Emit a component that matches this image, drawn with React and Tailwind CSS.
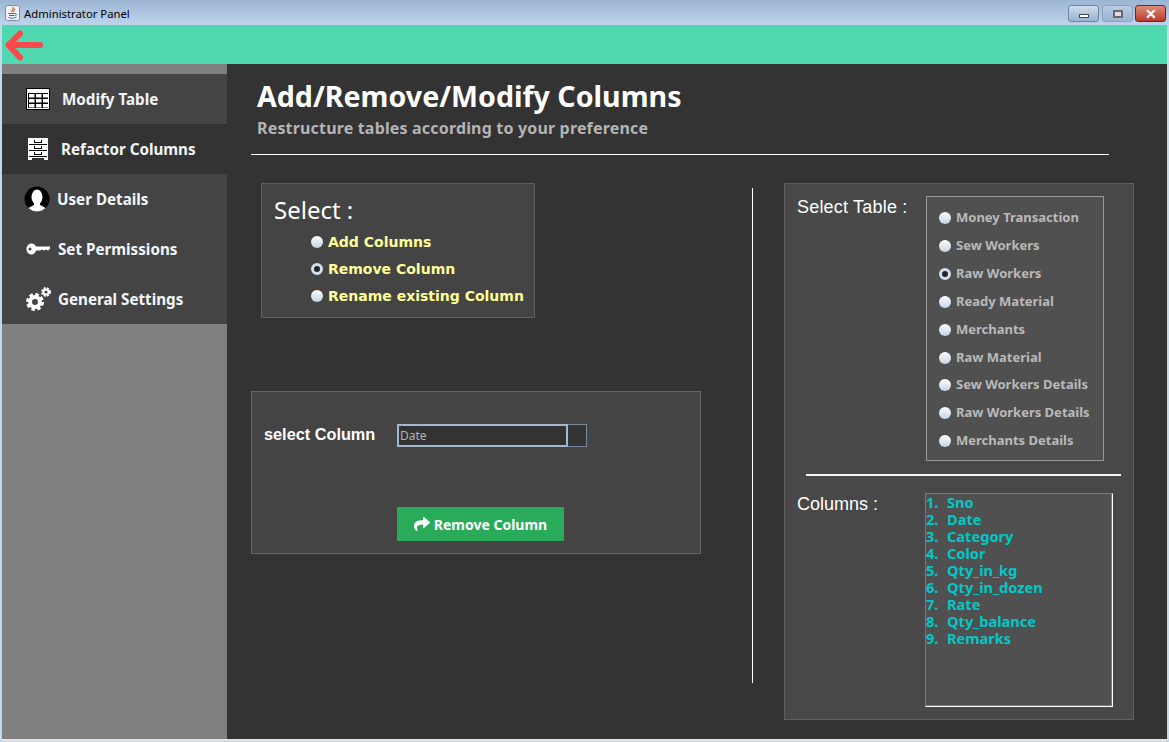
import { FaShare } from 'react-icons/fa';

const TableIcon = () => (
  <svg width="24" height="22" viewBox="0 0 24 22">
    <rect x="0" y="0" width="24" height="22" fill="#000" />
    <rect x="1" y="1" width="22" height="20" fill="#fff" />
    <rect x="2" y="5" width="20" height="15" fill="#000" />
    {[6, 11, 16].map((y) =>
      [3, 10, 17].map((x) => <rect key={`${x}-${y}`} x={x} y={y} width="5.5" height="3.5" fill="#fff" />)
    )}
  </svg>
);

const CabinetIcon = () => (
  <svg width="22" height="22" viewBox="0 0 22 22" shapeRendering="crispEdges">
    <rect x="1" y="0" width="20" height="20" fill="#fff" />
    <rect x="1" y="20" width="4" height="2" fill="#fff" />
    <rect x="17" y="20" width="4" height="2" fill="#fff" />
    {[1, 7, 13].map((y) => (
      <g key={y}>
        <rect x="2" y={y + 5} width="18" height="1" fill="#000" />
        <rect x="7" y={y + 1} width="1" height="2" fill="#000" />
        <rect x="14" y={y + 1} width="1" height="2" fill="#000" />
        <rect x="7" y={y + 3} width="8" height="1" fill="#000" />
      </g>
    ))}
  </svg>
);

const UserIcon = () => (
  <svg width="26" height="26" viewBox="0 0 26 26">
    <circle cx="13" cy="13" r="12.5" fill="#000" />
    <ellipse cx="13" cy="11" rx="5.5" ry="7.5" fill="#fff" />
    <path d="M10 16 L10 19 C7 20.5 5 21.5 4.5 22 C7 24.5 10 25.5 13 25.5 C16 25.5 19 24.5 21.5 22 C21 21.5 19 20.5 16 19 L16 16 Z" fill="#fff" />
  </svg>
);

const KeyIcon = () => (
  <svg width="24" height="12" viewBox="0 0 24 12">
    <path fillRule="evenodd" d="M5.5 0.5 C8 0.5 9.5 2 10 3.5 L24 3.5 L24 6 L22 7.5 L20 6.5 L18 7.5 L16 6.5 L14 7.5 L10 7.5 C9.5 9.5 8 11.5 5.5 11.5 C2.5 11.5 0.5 9 0.5 6 C0.5 3 2.5 0.5 5.5 0.5 Z M4 4.5 A1.5 1.5 0 1 0 4 7.5 A1.5 1.5 0 1 0 4 4.5 Z" fill="#fff" />
  </svg>
);

const GearsIcon = () => (
  <svg width="25" height="24" viewBox="0 0 25 24">
    <circle cx="9" cy="15" r="5" fill="none" stroke="#fff" strokeWidth="4" />
    <circle cx="9" cy="15" r="7.5" fill="none" stroke="#fff" strokeWidth="3" strokeDasharray="3.5 2.4" />
    <circle cx="20" cy="5" r="2.6" fill="none" stroke="#fff" strokeWidth="2" />
    <circle cx="20" cy="5" r="4" fill="none" stroke="#fff" strokeWidth="1.8" strokeDasharray="2 1.2" />
  </svg>
);

const JavaIcon = () => (
  <svg width="15" height="16" viewBox="0 0 15 16">
    <rect x="0.5" y="0.5" width="14" height="15" rx="2" fill="#eef2f7" stroke="#7d8ea3" />
    <path d="M8 2 C9.5 4 6 5 7 7 M9.5 3.5 C10 5 8 5.5 8.5 7" fill="none" stroke="#e0602a" strokeWidth="1.2" />
    <path d="M3.5 8.5 H10 M4 10.5 H9.5 M3.5 12.5 C6 13.5 9 13.5 11.5 12 M10 8.5 C12 8.5 12 10.5 10 10.5" fill="none" stroke="#3d6a9c" strokeWidth="1" />
  </svg>
);

const Radio = ({ checked }) => (
  <span
    className={`block w-[12px] h-[12px] shrink-0 rounded-full ${
      checked
        ? 'bg-[#23262b] border-[3px] border-[#d5deea]'
        : 'bg-gradient-to-b from-[#ffffff] to-[#c4d2e3]'
    }`}
  />
);

const sideItems = [
  { label: 'Modify Table', icon: <TableIcon />, iconBox: 'pl-[24px] gap-[12px]' },
  { label: 'Refactor Columns', icon: <CabinetIcon />, iconBox: 'pl-[25px] gap-[12px]', active: true },
  { label: 'User Details', icon: <UserIcon />, iconBox: 'pl-[22px] gap-[7px]' },
  { label: 'Set Permissions', icon: <KeyIcon />, iconBox: 'pl-[24px] gap-[8px]' },
  { label: 'General Settings', icon: <GearsIcon />, iconBox: 'pl-[24px] gap-[7px]' }
];

const modes = ['Add Columns', 'Remove Column', 'Rename existing Column'];
const tables = [
  'Money Transaction',
  'Sew Workers',
  'Raw Workers',
  'Ready Material',
  'Merchants',
  'Raw Material',
  'Sew Workers Details',
  'Raw Workers Details',
  'Merchants Details'
];
const columns = ['Sno', 'Date', 'Category', 'Color', 'Qty_in_kg', 'Qty_in_dozen', 'Rate', 'Qty_balance', 'Remarks'];

const App = () => {
  return (
    <div className="w-[1169px] h-[742px] flex flex-col overflow-hidden bg-[#c5d8ea] font-['Noto_Sans',sans-serif]">
      <div className="h-[25px] shrink-0 flex items-center bg-gradient-to-b from-[#9cb5d3] to-[#bed4ec] pl-[5px] pr-[3px]">
        <JavaIcon />
        <span className="ml-[4px] mt-[4px] text-[11.3px] text-black">Administrator Panel</span>
        <div className="ml-auto flex items-start self-start">
          <div className="w-[31px] h-[17px] mt-[5px] mr-[3px] rounded-[3px] border border-[#6f84a0] bg-gradient-to-b from-[#cfdceb] to-[#9ab3cf] flex items-end justify-center pb-[3px]">
            <span className="block w-[10px] h-[4px] bg-white border border-[#445]" />
          </div>
          <div className="w-[31px] h-[17px] mt-[5px] mr-[2px] rounded-[3px] border border-[#8ba2bd] bg-gradient-to-b from-[#b8cce2] to-[#9ab3cf] flex items-center justify-center">
            <span className="block w-[10px] h-[8px] bg-[#ddd] border-2 border-[#667]" />
          </div>
          <div className="w-[31px] h-[17px] mt-[5px] rounded-[3px] border border-[#5c2a2a] bg-gradient-to-b from-[#dd8a78] to-[#b83a2c] flex items-center justify-center">
            <span className="text-white text-[14px] leading-none font-bold">✕</span>
          </div>
        </div>
      </div>

      <div className="flex-1 flex flex-col mx-[2px] min-h-0">
        <div className="h-[39px] shrink-0 bg-[#50d8b0] flex items-center pl-[2px]">
          <svg width="40" height="32" viewBox="0 0 40 32">
            <path d="M16 4.5 L4.5 16 L16 28.5 M4.5 16 H36" fill="none" stroke="#fb4a4c" strokeWidth="6" strokeLinecap="round" strokeLinejoin="round" />
          </svg>
        </div>

        <div className="h-[675px] shrink-0 flex">
          <aside className="w-[225px] shrink-0 bg-[#808080] pt-[10px]">
            {sideItems.map((item) => (
              <div
                key={item.label}
                className={`h-[50px] flex items-center ${item.iconBox} ${item.active ? 'bg-[#333333]' : 'bg-[#444444]'}`}
              >
                {item.icon}
                <span className="text-[15.2px] font-bold text-[#f2f6fb] whitespace-nowrap">{item.label}</span>
              </div>
            ))}
          </aside>

          <main className="flex-1 bg-[#333333] pl-[24px] pt-[12px]">
            <div className="pl-[6px]">
              <h1 className="text-[28.6px] leading-[40px] font-bold text-white whitespace-nowrap">Add/Remove/Modify Columns</h1>
              <p className="text-[16px] leading-[20px] mt-[2px] font-bold tracking-[0.17px] text-[#b4b4b4] whitespace-nowrap">Restructure tables according to your preference</p>
            </div>
            <div className="w-[858px] h-px bg-white mt-[16px]" />

            <div className="flex mt-[28px]">
              <div className="w-[450px] shrink-0">
                <section className="ml-[10px] w-[274px] h-[135px] bg-[#444444] border border-[#5f5f5f] pl-[12px] pt-[10px]">
                  <div className="text-[24px] leading-[32px] text-white">Select :</div>
                  <div className="pl-[37px] mt-[6px] flex flex-col gap-[7px]">
                    {modes.map((mode) => (
                      <label key={mode} className="h-[20px] flex items-center gap-[5px]">
                        <Radio checked={mode === 'Remove Column'} />
                        <span className="text-[14px] font-bold text-[#ffff99] whitespace-nowrap font-['DejaVu_Sans',sans-serif]">{mode}</span>
                      </label>
                    ))}
                  </div>
                </section>

                <section className="mt-[73px] w-[450px] h-[163px] bg-[#444444] border border-[#666666] pl-[12px] pt-[32px]">
                  <div className="flex items-center">
                    <span className="w-[133px] -mt-[2px] text-[16.3px] font-bold text-white font-['Liberation_Sans',sans-serif]">select Column</span>
                    <div className="flex h-[23px]">
                      <div className="w-[171px] bg-[#333333] border-2 border-[#a3b8cc] text-[12px] leading-[19px] pl-[1px] text-[#b4b4b4]">Date</div>
                      <div className="w-[19px] bg-[#333333] border border-[#778899] border-l-0" />
                    </div>
                  </div>
                  <button className="ml-[133px] mt-[60px] w-[167px] h-[34px] bg-[#2aab5a] text-white text-[14px] font-bold flex items-center justify-center gap-[4px]">
                    <FaShare size={16} />
                    Remove Column
                  </button>
                </section>
              </div>

              <div className="w-px h-[495px] mt-[5px] ml-[51px] bg-white shrink-0" />

              <section className="ml-[31px] w-[350px] h-[537px] bg-[#484848] border border-[#5f5f5f] pl-[12px] pt-[12px]">
                <div className="flex">
                  <span className="w-[129px] text-[18px] tracking-[0.2px] leading-[22px] text-white font-['Liberation_Sans',sans-serif]">Select Table :</span>
                  <div className="w-[178px] h-[265px] bg-[#505050] border border-[#999999] pl-[12px] pt-[7px] flex flex-col">
                    {tables.map((table, i) => (
                      <label key={table} className={`flex items-center gap-[5px] shrink-0 ${i === 5 ? 'h-[27px]' : 'h-[28px]'}`}>
                        <Radio checked={table === 'Raw Workers'} />
                        <span className="text-[13px] font-bold text-[#b9b9b9] whitespace-nowrap">{table}</span>
                      </label>
                    ))}
                  </div>
                </div>
                <div className="ml-[9px] w-[315px] h-[2px] bg-[#f4f4f4] mt-[13px]" />
                <div className="flex mt-[17px]">
                  <span className="w-[128px] text-[18px] leading-[22px] text-white font-['Liberation_Sans',sans-serif]">Columns :</span>
                  <ol className="w-[188px] h-[214px] bg-[#505050] border border-t-[#778] border-l-[#778] border-r-white border-b-white shadow-[inset_-1px_-1px_0_#778]">
                    {columns.map((col, i) => (
                      <li key={col} className="h-[17px] flex text-[14.6px] leading-[17px] font-bold text-[#00c8c8] whitespace-nowrap">
                        <span className="w-[21px]">{i + 1}.</span>
                        {col}
                      </li>
                    ))}
                  </ol>
                </div>
              </section>
            </div>
          </main>
        </div>
        <div className="h-[2px] bg-[#e4e4e4]" />
      </div>
    </div>
  );
};

export default App;
